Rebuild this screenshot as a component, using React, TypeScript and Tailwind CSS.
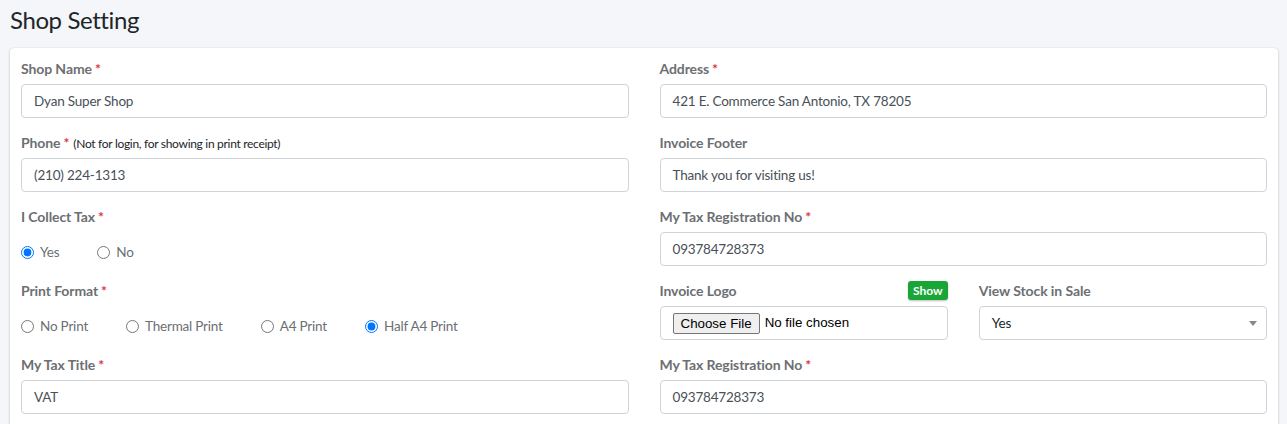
import React from 'react';

const font = { fontFamily: 'Lato, "Noto Sans", sans-serif' };

const Req = () => <span className="text-[#dc3545] ml-[3px]">*</span>;

const Label: React.FC<{ text: string; required?: boolean; children?: React.ReactNode }> = ({ text, required, children }) => (
  <div className="h-[20px] leading-[20px] mb-[5px] text-[14px] font-bold text-[#6c6f73] tracking-[-0.1px] whitespace-nowrap">
    {text}
    {required && <Req />}
    {children}
  </div>
);

const TextBox: React.FC<{ value: string }> = ({ value }) => (
  <div className="h-[34px] border border-[#ced4da] rounded-[4px] px-3 flex items-center text-[13.5px] tracking-[-0.2px] text-[#495057] bg-white">
    {value}
  </div>
);

const Group: React.FC<{ children: React.ReactNode }> = ({ children }) => <div className="mb-[15px]">{children}</div>;

const Radio: React.FC<{ name: string; label: string; checked?: boolean }> = ({ name, label, checked }) => (
  <label className="flex items-center mr-[38px] text-[13.5px] tracking-[-0.2px] text-[#6c6f73]">
    <input type="radio" name={name} defaultChecked={checked} className="w-[13px] h-[13px] m-0 mr-[6px]" />
    {label}
  </label>
);

export default function App() {
  return (
    <div className="min-h-screen bg-[#f4f6f9] text-[#212529]" style={font}>
      <div className="h-[48px] px-[10px] pt-[5px]">
        <h1 className="text-[24px] leading-[29px] font-normal tracking-[-0.4px] text-[#212529]">Shop Setting</h1>
      </div>
      <div className="mx-[10px] mr-[9px] bg-white rounded-[4px] shadow-[0_0_1px_rgba(0,0,0,0.125),0_1px_3px_rgba(0,0,0,0.2)] px-[11px] pt-[11px] pb-[4px]">
        <div className="grid grid-cols-2 gap-x-[31px]">
          <div>
            <Group>
              <Label text="Shop Name" required />
              <TextBox value="Dyan Super Shop" />
            </Group>
            <Group>
              <Label text="Phone" required>
                <span className="ml-[4px] text-[12px] font-normal tracking-[-0.3px] text-[#212529]">(Not for login, for showing in print receipt)</span>
              </Label>
              <TextBox value="(210) 224-1313" />
            </Group>
            <Group>
              <Label text="I Collect Tax" required />
              <div className="h-[34px] flex items-center pt-[6px]">
                <Radio name="tax" label="Yes" checked />
                <Radio name="tax" label="No" />
              </div>
            </Group>
            <Group>
              <Label text="Print Format" required />
              <div className="h-[34px] flex items-center pt-[6px]">
                <Radio name="print" label="No Print" />
                <Radio name="print" label="Thermal Print" />
                <Radio name="print" label="A4 Print" />
                <Radio name="print" label="Half A4 Print" checked />
              </div>
            </Group>
            <Group>
              <Label text="My Tax Title" required />
              <TextBox value="VAT" />
            </Group>
          </div>
          <div>
            <Group>
              <Label text="Address" required />
              <TextBox value="421 E. Commerce San Antonio, TX 78205" />
            </Group>
            <Group>
              <Label text="Invoice Footer" />
              <TextBox value="Thank you for visiting us!" />
            </Group>
            <Group>
              <Label text="My Tax Registration No" required />
              <TextBox value="093784728373" />
            </Group>
            <div className="grid grid-cols-2 gap-x-[31px]">
              <Group>
                <div className="h-[20px] mb-[5px] flex items-center justify-between">
                  <span className="text-[14px] font-bold text-[#6c6f73] tracking-[-0.1px] leading-[20px]">Invoice Logo</span>
                  <span className="h-[19px] px-[5px] rounded-[3px] bg-[#1aa637] text-white text-[12px] font-bold leading-[19px] shadow-[0_1px_2px_rgba(0,0,0,0.25)] -mt-[2px]">
                    Show
                  </span>
                </div>
                <div className="h-[34px] border border-[#ced4da] rounded-[4px] pl-[12px] flex items-center bg-white" style={{ fontFamily: '"Liberation Sans", Arial, sans-serif' }}>
                  <span className="h-[21px] px-[7px] border border-[#767676] rounded-[2px] bg-[#efefef] text-[13.33px] leading-[19px] text-black">
                    Choose File
                  </span>
                  <span className="ml-[5px] text-[13.33px] text-black">No file chosen</span>
                </div>
              </Group>
              <Group>
                <Label text="View Stock in Sale" />
                <div className="h-[34px] border border-[#ced4da] rounded-[4px] pl-[12px] pr-[9px] flex items-center justify-between bg-white text-[13.5px] tracking-[-0.2px] text-[#212529]">
                  <span>Yes</span>
                  <svg width="8" height="5" viewBox="0 0 8 5">
                    <path d="M0 0 L8 0 L4 5 Z" fill="#888" />
                  </svg>
                </div>
              </Group>
            </div>
            <Group>
              <Label text="My Tax Registration No" required />
              <TextBox value="093784728373" />
            </Group>
          </div>
        </div>
      </div>
    </div>
  );
}
